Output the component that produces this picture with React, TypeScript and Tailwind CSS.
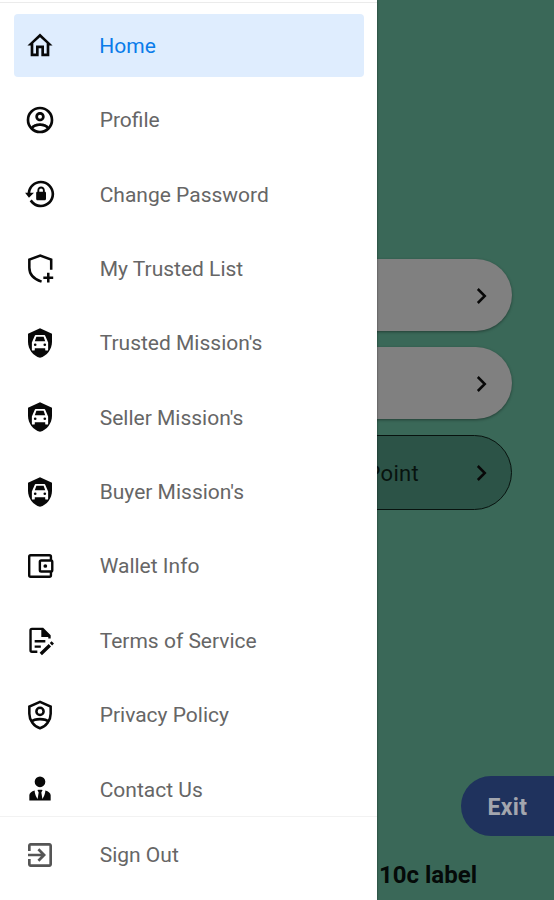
import React from "react";

type IconProps = { children: React.ReactNode; color?: string };

function Glyph({ children, color = "#080808" }: IconProps) {
  return (
    <svg viewBox="0 0 24 24" className="size-8 shrink-0" fill={color} stroke="none">
      {children}
    </svg>
  );
}

const shield = "M12 1L3 5V11C3 16.55 6.84 21.74 12 23C17.16 21.74 21 16.55 21 11V5Z";

const ShieldCar = () => (
  <Glyph>
    <path d={shield} />
    <path
      fill="#fff"
      fillRule="evenodd"
      d="M8.9 6H15.1Q15.8 6 16 6.7L18.1 11.6V17Q18.1 17.7 17.4 17.7H16.6Q15.9 17.7 15.9 17V15.9H8.1V17Q8.1 17.7 7.4 17.7H6.6Q5.9 17.7 5.9 17V11.6L8 6.7Q8.2 6 8.9 6ZM9.3 7.4L8.1 10.7H15.9L14.7 7.4ZM8.4 12.3A1 1 0 1 0 8.4 14.3A1 1 0 1 0 8.4 12.3ZM15.6 12.3A1 1 0 1 0 15.6 14.3A1 1 0 1 0 15.6 12.3Z"
    />
  </Glyph>
);

const items: { label: string; icon: React.ReactNode }[] = [
  {
    label: "Home",
    icon: (
      <Glyph>
        <path d="M12 5.4L17 9.9V17.7H15V11.7H9V17.7H7V9.9L12 5.4M12 2.7L2.6 11.7H5V19.7H11V13.7H13V19.7H19V11.7H21.4Z" />
      </Glyph>
    ),
  },
  {
    label: "Profile",
    icon: (
      <Glyph>
        <path d="M12,2A10,10 0 0,0 2,12A10,10 0 0,0 12,22A10,10 0 0,0 22,12A10,10 0 0,0 12,2M7.07,18.28C7.5,17.38 10.12,16.5 12,16.5C13.88,16.5 16.5,17.38 16.93,18.28C15.57,19.36 13.86,20 12,20C10.14,20 8.43,19.36 7.07,18.28M18.36,16.83C16.93,15.09 13.46,14.5 12,14.5C10.54,14.5 7.07,15.09 5.64,16.83C4.62,15.5 4,13.82 4,12C4,7.59 7.59,4 12,4C16.41,4 20,7.59 20,12C20,13.82 19.38,15.5 18.36,16.83M12,6C10.06,6 8.5,7.56 8.5,9.5C8.5,11.44 10.06,13 12,13C13.94,13 15.5,11.44 15.5,9.5C15.5,7.56 13.94,6 12,6M12,11A1.5,1.5 0 0,1 10.5,9.5A1.5,1.5 0 0,1 12,8A1.5,1.5 0 0,1 13.5,9.5A1.5,1.5 0 0,1 12,11Z" />
      </Glyph>
    ),
  },
  {
    label: "Change Password",
    icon: (
      <Glyph>
        <path d="M12.63,2C18.16,2 22.64,6.5 22.64,12C22.64,17.5 18.16,22 12.63,22C9.12,22 6.05,20.18 4.26,17.43L5.84,16.18C7.25,18.47 9.76,20 12.64,20A8,8 0 0,0 20.64,12A8,8 0 0,0 12.64,4C8.56,4 5.2,7.06 4.71,11H7.47L3.73,14.73L0.8,11H2.69C3.19,5.95 7.45,2 12.63,2M15.59,10.24C16.09,10.25 16.5,10.65 16.5,11.16V15.77C16.5,16.27 16.09,16.69 15.58,16.69H10.05C9.54,16.69 9.13,16.27 9.13,15.77V11.16C9.13,10.65 9.54,10.25 10.04,10.24V9.23C10.04,7.7 11.29,6.46 12.81,6.46C14.34,6.46 15.59,7.7 15.59,9.23V10.24M12.81,7.86C12.06,7.86 11.44,8.47 11.44,9.23V10.24H14.19V9.23C14.19,8.47 13.57,7.86 12.81,7.86Z" />
      </Glyph>
    ),
  },
  {
    label: "My Trusted List",
    icon: (
      <Glyph>
        <g fill="none" stroke="#080808" strokeWidth="1.9">
          <path d="M13.2 21.5C7.5 19.6 4 15.8 4 11V5L12.2 1.9L20.4 5V12.6" />
          <path d="M18.2 14.8V22.2M14.5 18.5H21.9" />
        </g>
      </Glyph>
    ),
  },
  { label: "Trusted Mission's", icon: <ShieldCar /> },
  { label: "Seller Mission's", icon: <ShieldCar /> },
  { label: "Buyer Mission's", icon: <ShieldCar /> },
  {
    label: "Wallet Info",
    icon: (
      <Glyph>
        <g fill="none" stroke="#080808" strokeWidth="1.8" strokeLinejoin="round">
          <path d="M20.2 7.8V5Q20.2 3.9 19.1 3.9H5Q3.9 3.9 3.9 5V19Q3.9 20.1 5 20.1H19.1Q20.2 20.1 20.2 19V16.2" />
          <rect x="11.9" y="7.9" width="9.3" height="8.2" rx="1" />
        </g>
        <circle cx="16" cy="12" r="1.4" />
      </Glyph>
    ),
  },
  {
    label: "Terms of Service",
    icon: (
      <Glyph>
        <g fill="none" stroke="#080808" strokeWidth="1.8">
          <path d="M10 20.1H6Q4.9 20.1 4.9 19V4Q4.9 2.9 6 2.9H14L19.1 8V10.2" />
          <path d="M8 12.2H16M8 16.2H12.6" />
          <path d="M12.6 21.8L19.4 15.2M20.2 14.4L21.6 13" strokeWidth="2.5" />
        </g>
        <path d="M13 2.4V9H19.7Z" />
      </Glyph>
    ),
  },
  {
    label: "Privacy Policy",
    icon: (
      <Glyph>
        <g fill="none" stroke="#080808" strokeWidth="1.9">
          <path d="M12 2.1L4 5.6V11C4 15.9 7.4 20.7 12 22C16.6 20.7 20 15.9 20 11V5.6Z" />
          <circle cx="12" cy="9.3" r="2.7" />
          <path d="M5.5 17.2C8 14.4 16 14.4 18.5 17.2" />
        </g>
      </Glyph>
    ),
  },
  {
    label: "Contact Us",
    icon: (
      <Glyph>
        <path d="M12 2.6A4 4 0 0 1 16 6.6A4 4 0 0 1 12 10.6A4 4 0 0 1 8 6.6A4 4 0 0 1 12 2.6M16 13.14C16 14.2 15.72 16.67 13.81 19.43L13 14.6L13.94 12.72C13.32 12.65 12.67 12.6 12 12.6S10.68 12.65 10.06 12.72L11 14.6L10.19 19.43C8.28 16.67 8 14.2 8 13.14C5.61 13.84 4 15.1 4 16.6V20.6H20V16.6C20 15.1 18.4 13.84 16 13.14Z" />
      </Glyph>
    ),
  },
];

function MissionRow({ children, outlined = false }: { children?: React.ReactNode; outlined?: boolean }) {
  return (
    <div
      className={
        outlined
          ? "flex h-[75px] items-center justify-end rounded-full border-[1.5px] border-[#08130f] bg-[#2c5347] pt-px pr-[21px]"
          : "mb-4 flex h-[72px] items-center justify-end rounded-full bg-[#808080] pt-0.5 pr-[22px] shadow-[0_1px_3px_rgba(0,0,0,0.4)]"
      }
    >
      {children}
      <svg viewBox="0 0 18 18" className="size-[18px]" fill="none" stroke="#080808" strokeWidth="2.5">
        <path d="M5.8 2L12.8 9L5.8 16" />
      </svg>
    </div>
  );
}

export default function App() {
  return (
    <div className="relative h-[900px] w-[554px] overflow-hidden bg-[#3a6858] font-['Roboto',sans-serif]">
      <main className="flex h-full flex-col pt-[259px]">
        <div className="ml-[42px] w-[470px]">
          <MissionRow />
          <MissionRow />
          <MissionRow outlined>
            <span className="mr-[53px] text-[22px] tracking-[0.3px] text-[#08130f]">Point</span>
          </MissionRow>
        </div>
        <div className="mt-[266px] flex h-[60px] w-[93px] items-center self-end rounded-l-full bg-[#1f325d] pt-[4px] pl-[26.5px] text-[23px] font-bold text-[#a3a6ae]">
          <span className="tracking-[0.3px]">Exit</span>
        </div>
        <div className="mt-[22px] pl-[379px] text-[24px] leading-[34px] font-bold whitespace-nowrap text-[#050a08]">10c label</div>
      </main>

      <aside className="absolute inset-y-0 left-0 flex w-[377.4px] flex-col bg-white shadow-[0_0_2px_rgba(0,0,0,0.5)]">
        <div className="h-[3px] shrink-0 border-b border-[#ebebeb]" />
        <nav className="flex h-[814px] shrink-0 flex-col gap-[11.4px] overflow-hidden border-b border-[#f2f2f2] pt-[11px] pr-[13.4px] pl-[14px]">
          {items.map(({ label, icon }, i) => (
            <a
              key={label}
              className={
                i === 0
                  ? "flex h-[63px] shrink-0 items-center rounded-[4px] bg-[#dfedfe] pl-[10px] text-[#0a7cea]"
                  : "flex h-[63px] shrink-0 items-center pl-[10.4px] text-[#666]"
              }
            >
              {icon}
              <span className="ml-[43.3px] pt-[2px] text-[21px]">{label}</span>
            </a>
          ))}
        </nav>
        <a className="flex h-[76px] shrink-0 items-center pl-[24.4px] text-[#666]">
          <Glyph color="#555">
            <path d="M10.09 15.59L11.5 17l5-5-5-5-1.41 1.41L12.67 11H3v2h9.67l-2.58 2.59zM19 3H5c-1.11 0-2 .9-2 2v4h2V5h14v14H5v-4H3v4c0 1.1.89 2 2 2h14c1.1 0 2-.9 2-2V5c0-1.1-.9-2-2-2z" />
          </Glyph>
          <span className="ml-[43.3px] pt-[2px] text-[21px]">Sign Out</span>
        </a>
      </aside>
    </div>
  );
}
